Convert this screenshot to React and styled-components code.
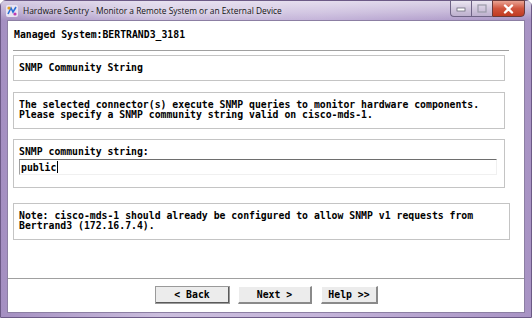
import styled, { createGlobalStyle } from 'styled-components';

const GlobalStyle = createGlobalStyle`
  html, body {
    margin: 0;
    padding: 0;
    background: #ffffff;
  }
  * {
    box-sizing: border-box;
  }
`;

const MONO = `"DejaVu Sans Mono", "Liberation Mono", monospace`;

const App = () => {
  return (
    <>
      <GlobalStyle />
      <Window>
        <TitleBar>
          <AppIcon viewBox="0 0 14 14">
            <rect x="1" y="1" width="12" height="12" rx="2" fill="#e9e4f2" />
            <path d="M3 10 L6 4 L8 8 L11 3" stroke="#2a6fd6" strokeWidth="1.6" fill="none" />
            <circle cx="4" cy="4" r="1.6" fill="#e0a020" />
            <circle cx="10" cy="10" r="1.6" fill="#c03ab0" />
          </AppIcon>
          <Caption>Hardware Sentry - Monitor a Remote System or an External Device</Caption>
          <Controls>
            <CtrlBtn>
              <svg width="10" height="6" viewBox="0 0 10 6">
                <rect x="1" y="2" width="8" height="3" fill="#fff" stroke="#6b6b7a" strokeWidth="0.8" />
              </svg>
            </CtrlBtn>
            <CtrlBtn>
              <svg width="10" height="9" viewBox="0 0 10 9">
                <rect x="1" y="1" width="8" height="7" fill="none" stroke="#9a9aa8" strokeWidth="1.2" />
              </svg>
            </CtrlBtn>
            <CloseBtn>
              <svg width="11" height="10" viewBox="0 0 11 10">
                <path d="M2 1.5 L9 8.5 M9 1.5 L2 8.5" stroke="#fff" strokeWidth="2.4" strokeLinecap="round" />
              </svg>
            </CloseBtn>
          </Controls>
        </TitleBar>
        <Client>
          <Header>Managed System:BERTRAND3_3181</Header>
          <Etched />
          <Panels>
            <Panel $height={26} $top={3}>
              <Line>SNMP Community String</Line>
            </Panel>
            <Panel $height={37} $top={11}>
              <Line>The selected connector(s) execute SNMP queries to monitor hardware components.</Line>
              <Line>Please specify a SNMP community string valid on cisco-mds-1.</Line>
            </Panel>
            <Panel $height={49} $top={10}>
              <Line>SNMP community string:</Line>
              <Input>
                public<Caret />
              </Input>
            </Panel>
            <Panel $height={37} $top={15} $wide>
              <Line>Note: cisco-mds-1 should already be configured to allow SNMP v1 requests from</Line>
              <Line>Bertrand3 (172.16.7.4).</Line>
            </Panel>
          </Panels>
          <Footer>
            <Button $default $width={75}>&lt; Back</Button>
            <Button $width={74} $left={8}>Next &gt;</Button>
            <Button $width={57} $left={9}>Help &gt;&gt;</Button>
          </Footer>
        </Client>
      </Window>
    </>
  );
};

const Window = styled.div`
  width: 532px;
  height: 318px;
  display: flex;
  flex-direction: column;
  background: linear-gradient(90deg, #a48fc1 0%, #cbbedd 30%, #c4b4d9 60%, #a893c4 100%);
  padding: 0 6px 4px 6px;
  border: 1px solid #6c5a86;
  border-radius: 6px 6px 0 0;
`;

const TitleBar = styled.div`
  height: 19px;
  display: flex;
  align-items: center;
  margin: 0 -6px;
  padding-left: 4px;
  background: linear-gradient(180deg, rgba(255,255,255,0.55) 0%, rgba(255,255,255,0.25) 60%, rgba(255,255,255,0) 100%);
`;

const AppIcon = styled.svg`
  width: 14px;
  height: 14px;
  margin-right: 4px;
`;

const Caption = styled.span`
  font-family: "Open Sans", "Noto Sans", sans-serif;
  font-size: 8.4px;
  color: #141414;
  text-shadow: 0 0 6px rgba(255,255,255,0.9);
  flex: 1;
  white-space: nowrap;
`;

const Controls = styled.div`
  display: flex;
  align-self: flex-start;
  margin-right: 6px;
  margin-top: -1px;
`;

const CtrlBtn = styled.div`
  width: 21px;
  height: 17px;
  display: flex;
  align-items: center;
  justify-content: center;
  background: linear-gradient(180deg, #ebe6f1 0%, #d2c8de 50%, #bdb0ce 100%);
  border: 1px solid #6e6385;
  border-right: none;
  &:first-child {
    border-bottom-left-radius: 4px;
  }
`;

const CloseBtn = styled.div`
  width: 33px;
  height: 17px;
  display: flex;
  align-items: center;
  justify-content: center;
  background: linear-gradient(180deg, #e9a393 0%, #d0553e 50%, #c03a22 100%);
  border: 1px solid #6a3a3a;
  border-bottom-right-radius: 4px;
`;

const Client = styled.div`
  flex: 1;
  display: flex;
  flex-direction: column;
  background: #ffffff;
  border: 1px solid #8c7fa3;
  font-family: ${MONO};
  font-weight: bold;
  font-size: 9.8px;
  color: #000;
`;

const Header = styled.div`
  height: 29px;
  padding: 8px 0 0 6px;
  line-height: 12px;
`;

const Etched = styled.div`
  margin: 0 15px 0 5px;
  height: 2px;
  border-top: 1px solid #a0a0a0;
  border-bottom: 1px solid #ffffff;
`;

const Panels = styled.div`
  display: flex;
  flex-direction: column;
  padding-left: 5px;
  flex: 1;
`;

const Panel = styled.div`
  height: ${(p) => p.$height}px;
  margin-top: ${(p) => p.$top}px;
  width: ${(p) => (p.$wide ? 497 : 492)}px;
  border: 1px solid #c4c4c4;
  padding: 7px 5px 0 5px;
  display: flex;
  flex-direction: column;
`;

const Line = styled.div`
  line-height: 10px;
  white-space: pre;
`;

const Input = styled.div`
  margin-top: 2px;
  width: 478px;
  height: 16px;
  border-top: 1px solid #6e6e6e;
  border-left: 1px solid #a0a0a0;
  border-right: 1px solid #f0f0f0;
  border-bottom: 1px solid #f0f0f0;
  padding: 2px 0 0 1px;
  line-height: 11px;
  display: flex;
  align-items: flex-start;
`;

const Caret = styled.span`
  display: inline-block;
  width: 1px;
  height: 12px;
  background: #000;
  margin-left: 1px;
  margin-top: -1px;
`;

const Footer = styled.div`
  height: 34px;
  border-top: 1px solid #a0a0a0;
  box-shadow: inset 0 1px 0 #ffffff;
  display: flex;
  justify-content: center;
  align-items: flex-start;
  padding-top: 7px;
  padding-left: 1px;
`;

const Button = styled.div`
  width: ${(p) => p.$width}px;
  height: 18px;
  margin-left: ${(p) => p.$left || 0}px;
  display: flex;
  align-items: center;
  justify-content: center;
  background: #ececec;
  border-top: 1px solid #ffffff;
  border-left: 1px solid #ffffff;
  border-right: 2px solid ${(p) => (p.$default ? '#5a5a5a' : '#8a8a8a')};
  border-bottom: 2px solid ${(p) => (p.$default ? '#5a5a5a' : '#8a8a8a')};
  outline: ${(p) => (p.$default ? '1px solid #9a9a9a' : 'none')};
  outline-offset: -1px;
`;

export default App;
